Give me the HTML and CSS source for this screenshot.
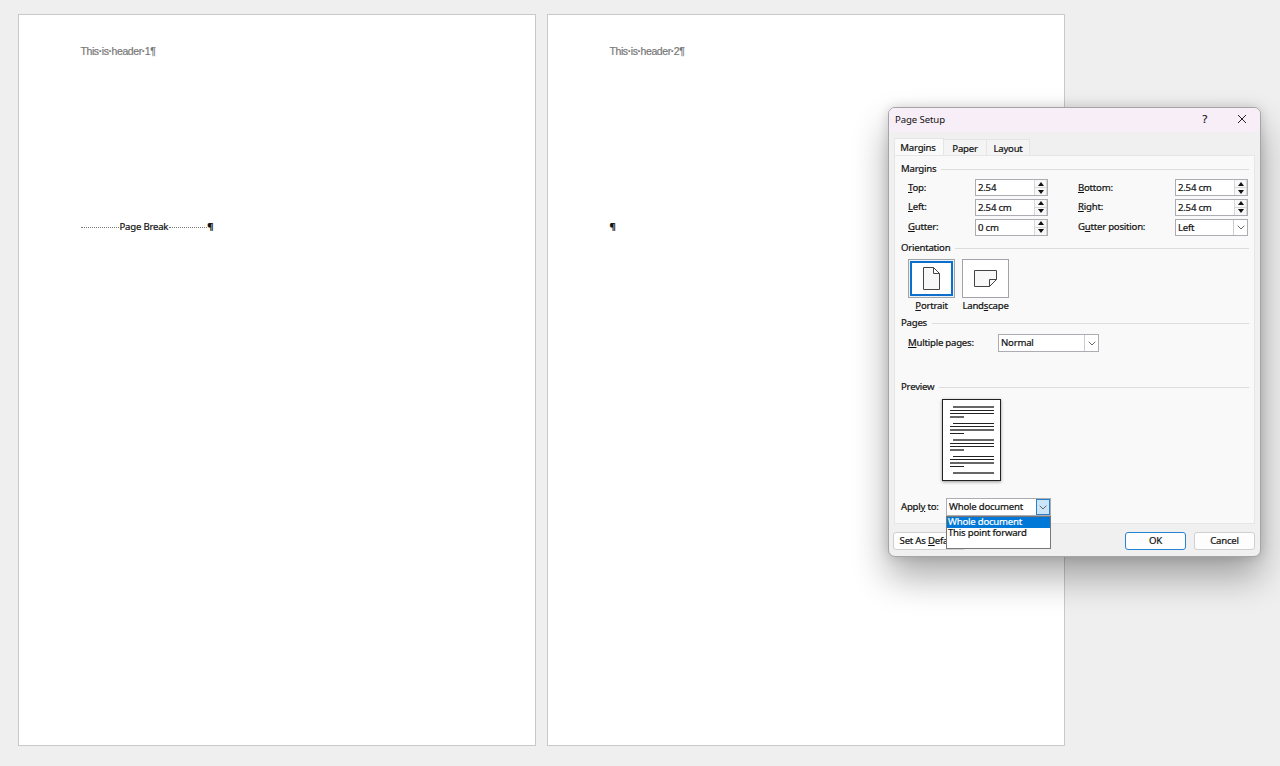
FILE: index.html
```html
<!DOCTYPE html>
<html lang="en">
<head>
<meta charset="utf-8">
<title>Page Setup</title>
<link rel="stylesheet" href="styles.css">
</head>
<body>
<main class="workspace">
  <article class="sheet">
    <div class="header-text">This<b>·</b>is<b>·</b>header<b>·</b>1¶</div>
    <div class="page-break"><span class="dots"></span><span class="break-label">Page Break</span><span class="dots"></span><span class="pilcrow">¶</span></div>
  </article>
  <article class="sheet">
    <div class="header-text">This<b>·</b>is<b>·</b>header<b>·</b>2¶</div>
    <div class="page-break"><span class="pilcrow">¶</span></div>
  </article>
</main>

<section class="dialog">
  <header class="titlebar">
    <span class="title">Page Setup</span>
    <span class="help">?</span>
    <svg class="close" viewBox="0 0 10 10"><path d="M1 1L9 9M9 1L1 9"/></svg>
  </header>
  <nav class="tabs">
    <span class="tab active">Margins</span>
    <span class="tab">Paper</span>
    <span class="tab">Layout</span>
  </nav>
  <div class="panel">
    <h2 class="group">Margins</h2>
    <div class="fields">
      <label><u>T</u>op:</label>
      <div class="spin"><span class="value">2.54</span><span class="steps"><i><svg viewBox="0 0 6 4"><path d="M0 4L3 0L6 4Z"/></svg></i><i><svg viewBox="0 0 6 4"><path d="M0 0L3 4L6 0Z"/></svg></i></span></div>
      <label class="second"><u>B</u>ottom:</label>
      <div class="spin"><span class="value">2.54 cm</span><span class="steps"><i><svg viewBox="0 0 6 4"><path d="M0 4L3 0L6 4Z"/></svg></i><i><svg viewBox="0 0 6 4"><path d="M0 0L3 4L6 0Z"/></svg></i></span></div>
      <label><u>L</u>eft:</label>
      <div class="spin"><span class="value">2.54 cm</span><span class="steps"><i><svg viewBox="0 0 6 4"><path d="M0 4L3 0L6 4Z"/></svg></i><i><svg viewBox="0 0 6 4"><path d="M0 0L3 4L6 0Z"/></svg></i></span></div>
      <label class="second"><u>R</u>ight:</label>
      <div class="spin"><span class="value">2.54 cm</span><span class="steps"><i><svg viewBox="0 0 6 4"><path d="M0 4L3 0L6 4Z"/></svg></i><i><svg viewBox="0 0 6 4"><path d="M0 0L3 4L6 0Z"/></svg></i></span></div>
      <label><u>G</u>utter:</label>
      <div class="spin"><span class="value">0 cm</span><span class="steps"><i><svg viewBox="0 0 6 4"><path d="M0 4L3 0L6 4Z"/></svg></i><i><svg viewBox="0 0 6 4"><path d="M0 0L3 4L6 0Z"/></svg></i></span></div>
      <label class="second">G<u>u</u>tter position:</label>
      <div class="combo"><span class="value">Left</span><span class="arrow"><svg viewBox="0 0 8 5"><path d="M.7 .7L4 4L7.300 .7"/></svg></span></div>
    </div>

    <h2 class="group orientation">Orientation</h2>
    <div class="choices">
      <div class="choice selected">
        <div class="tile"><div class="tile-inner"><svg width="19" height="25" viewBox="0 0 19 25"><path d="M1.500 1.500H11.500L17.500 7.500V23.500H1.500ZM11.500 1.500V7.500H17.500"/></svg></div></div>
        <span><u>P</u>ortrait</span>
      </div>
      <div class="choice">
        <div class="tile"><div class="tile-inner"><svg width="25" height="19" viewBox="0 0 25 19"><path d="M1.500 1.500H23.500V10.500L16.500 17.500H1.500ZM16.500 17.500V10.500H23.500"/></svg></div></div>
        <span>Land<u>s</u>cape</span>
      </div>
    </div>

    <h2 class="group pages">Pages</h2>
    <div class="multiple">
      <label><u>M</u>ultiple pages:</label>
      <div class="combo"><span class="value">Normal</span><span class="arrow"><svg viewBox="0 0 8 5"><path d="M.7 .7L4 4L7.300 .7"/></svg></span></div>
    </div>

    <h2 class="group preview-head">Preview</h2>
    <div class="preview">
      <svg width="57" height="80" viewBox="0 0 57 80">
        <path class="strong" d="M7 10.500H51M7 13.500H51M10 23.500H51M7 26.500H51M7 33.500H21M7 43.500H51M7 46.500H51M10 56.500H51M7 59.500H51M7 66.500H21"/>
        <path class="soft" d="M10 7H51M7 17H21M7 30H51M10 40H51M7 50H21M7 63H51M10 73H51"/>
      </svg>
    </div>
    <div class="apply">
      <label>Appl<u>y</u> to:</label>
      <div class="combo open">
        <span class="value">Whole document</span><span class="arrow"><svg viewBox="0 0 8 5"><path d="M.7 .7L4 4L7.300 .7"/></svg></span>
        <ul class="menu"><li class="current">Whole document</li><li>This point forward</li></ul>
      </div>
    </div>
  </div>
  <footer class="actions">
    <button class="default">Set As <u>D</u>efault</button>
    <button class="ok">OK</button>
    <button>Cancel</button>
  </footer>
</section>
</body>
</html>
```
FILE: styles.css
```css
* { box-sizing: border-box; }
body {
  margin: 0;
  width: 1280px;
  height: 766px;
  overflow: hidden;
  background: #efefef;
  color: #111;
  font: 9.6px/12px "Noto Sans", "Open Sans", sans-serif;
  letter-spacing: -.22px;
  -webkit-text-stroke: .2px;
}
u { text-decoration-thickness: 1px; text-underline-offset: 1px; }
.workspace { display: flex; gap: 11px; padding: 14px 0 0 18px; }
.sheet {
  width: 518px;
  height: 732px;
  padding: 30px 61.5px;
  background: #fff;
  border: 1px solid #c9c9c9;
}
.header-text { color: #777; font: 10.5px/13px "Liberation Sans", Arial, sans-serif; letter-spacing: -.42px; }
.page-break { display: flex; align-items: center; height: 12px; margin-top: 163px; }
.dots { width: 38px; margin-top: 1px; border-top: 1px dotted #777; }
.break-label { margin: 0 1px; white-space: nowrap; }
.pilcrow { font-weight: bold; }

.dialog {
  position: absolute;
  left: 888px;
  top: 107px;
  width: 373px;
  height: 450px;
  background: #f0f0f0;
  border: 1px solid #a5a5a8;
  border-radius: 7px;
  box-shadow: 0 20px 36px rgba(0, 0, 0, .33), 0 0 12px rgba(0, 0, 0, .15);
}
.titlebar {
  display: flex;
  align-items: center;
  height: 24px;
  padding: 0 13px 2px 6px;
  background: #f7eef8;
  border-radius: 6px 6px 0 0;
}
.title { flex: 1; padding-top: 1px; letter-spacing: -.1px; -webkit-text-stroke: 0; }
.help { margin-right: 30px; font-size: 11px; }
.close { width: 10px; height: 10px; fill: none; stroke: #222; stroke-width: 1; }
.tabs { display: flex; align-items: flex-end; height: 23px; padding-left: 5px; }
.tab {
  width: 43px;
  height: 16px;
  background: #f4f4f4;
  border: 1px solid #e5e5e5;
  border-bottom: 0;
  border-left: 0;
  line-height: 17px;
  text-align: center;
}
.tab.active { width: 50px; height: 17px; padding-right: 2px; background: #fafafa; border-left: 1px solid #e5e5e5; }
.panel {
  width: 361px;
  height: 369px;
  margin-left: 5px;
  padding: 7px 5px 0 6px;
  background: #f9f9f9;
  border: 1px solid #e6e6e6;
}
.group {
  display: flex;
  align-items: center;
  gap: 5px;
  height: 12px;
  margin: 0;
  font-size: inherit;
  font-weight: normal;
}
.group::after { content: ""; flex: 1; border-top: 1px solid #ddd; }
.fields {
  display: grid;
  grid-template-columns: 67px 73px 30px 97px 73px;
  grid-template-rows: 19px 20px 20px;
  align-items: center;
  padding: 0 0 0 7px;
  margin-top: 3px;
}
.second { grid-column: 4; }
label { white-space: nowrap; }
.spin, .combo { display: flex; height: 17px; background: #fff; border: 1px solid #abadb3; }
.value { flex: 1; padding-left: 2px; line-height: 15px; white-space: nowrap; }
.steps { display: flex; flex-direction: column; width: 13px; background: #d8d8d8; gap: 1px; padding: 0 1px; }
.steps i { display: flex; flex: 1; align-items: center; justify-content: center; background: #f8f8f8; }
.steps svg { width: 6px; height: 4px; fill: #111; }
.combo .arrow {
  display: flex;
  align-items: center;
  justify-content: center;
  width: 14px;
  border-left: 1px solid #ccc;
}
.arrow svg { width: 8px; height: 5px; fill: none; stroke: #666; stroke-width: 1; }
.orientation { margin-top: 5px; }
.choices { display: flex; gap: 7px; height: 58px; padding: 5px 0 0 7px; }
.choice { width: 47px; text-align: center; }
.choice span { display: block; margin: 2px -3px 0; }
.tile { width: 47px; height: 39px; padding: 1px; background: #fff; border: 1px solid #a0a4aa; }
.tile-inner { display: flex; align-items: center; justify-content: center; height: 100%; }
.selected .tile { background: #eaf3fa; }
.selected .tile-inner { background: #fff; border: 2px solid #0b6fcb; }
.tile svg { fill: #f8f8f8; stroke: #444; stroke-width: 1; }
.pages { margin-top: 5px; }
.multiple { display: flex; align-items: center; height: 18px; margin-top: 5px; padding-left: 7px; }
.multiple label { width: 90px; }
.multiple .combo { width: 101px; height: 18px; }
.multiple .value, .open .value { line-height: 16px; }
.preview-head { margin-top: 29px; }
.preview {
  width: 59px;
  height: 82px;
  margin: 6px 0 0 41px;
  background: #fff;
  border: 1px solid #222;
  box-shadow: 0 1px 3px rgba(0, 0, 0, .4);
}
.preview svg { display: block; }
.preview .strong { stroke: #222; stroke-width: 1; }
.preview .soft { stroke: #666; stroke-width: 2; }
.apply { display: flex; align-items: center; height: 18px; margin-top: 17px; }
.apply label { width: 45px; }
.combo.open { position: relative; width: 105px; height: 18px; }
.combo.open .arrow { background: #cce4f7; border: 1px solid #2a80c8; }
.menu {
  position: absolute;
  left: -1px;
  top: 17px;
  width: 105px;
  height: 33px;
  margin: 0;
  padding: 0;
  list-style: none;
  background: #fff;
  border: 1px solid #777;
  z-index: 2;
}
.menu li { height: 11px; padding-left: 1px; line-height: 10px; white-space: nowrap; }
.menu .current { background: #0078d7; color: #fff; }
.actions { display: flex; gap: 8px; padding: 8px 5px 0 4px; }
button {
  width: 61px;
  height: 18px;
  padding: 0;
  background: #fdfdfd;
  border: 1px solid #d0d0d0;
  border-radius: 3px;
  color: inherit;
  font: inherit;
  letter-spacing: inherit;
  white-space: nowrap;
}
.actions .default { width: 73px; margin-right: auto; }
.ok { border-color: #2782cf; }
```
